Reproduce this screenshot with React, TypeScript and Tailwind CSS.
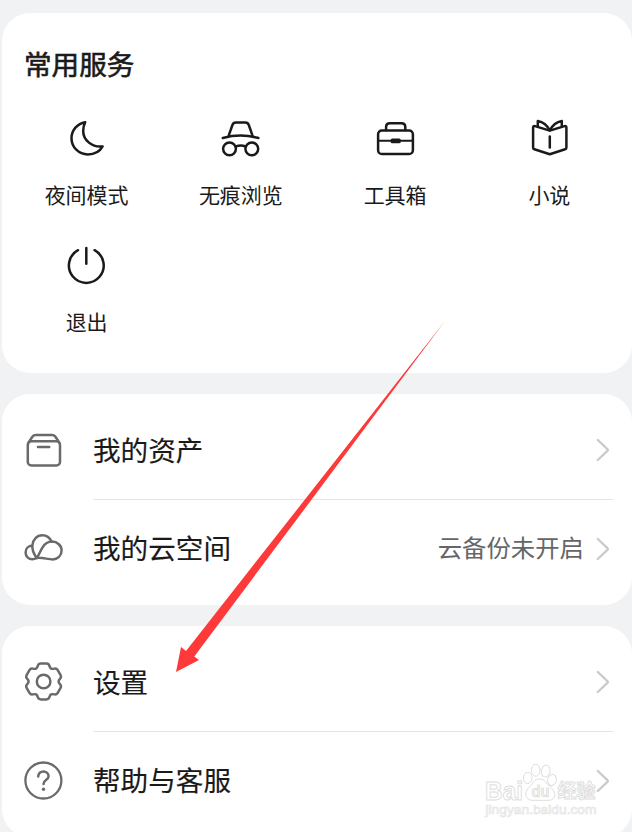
import type { ReactNode } from "react";
import clsx from "clsx";

interface IconProps {
  children: ReactNode;
  className?: string;
}

function Icon({ children, className }: IconProps) {
  return (
    <svg
      viewBox="0 0 40 40"
      fill="none"
      stroke="currentColor"
      strokeWidth={2.5}
      strokeLinecap="round"
      strokeLinejoin="round"
      className={clsx("size-10 shrink-0", className)}
    >
      {children}
    </svg>
  );
}

// ── Service icons
const MoonIcon = () => (
  <Icon>
    <path d="M19.2 3.2C11.4 4.4 5.5 11.2 5.5 19.2C5.5 28.2 12.8 35.4 21.8 35.4C28.2 35.4 34 32.2 36.6 27.4C26 28.6 17.2 21.2 17.2 12C17.2 9 17.8 6 19.2 3.2Z" />
  </Icon>
);

const IncognitoIcon = () => (
  <Icon>
    <path d="M2.8 19Q20.6 14.2 38.4 19" />
    <path d="M8.8 16.4L12.4 6Q13.2 3.5 15.8 3.5H25.4Q28 3.5 28.8 6L32.4 16.4" />
    <circle cx="9.5" cy="29.8" r="6.4" />
    <circle cx="31.8" cy="29.8" r="6.4" />
    <path d="M15.8 27.5Q20.7 25.6 25.6 27.5" />
  </Icon>
);

const ToolboxIcon = () => (
  <Icon>
    <rect x="3.1" y="11.4" width="34.8" height="23.6" rx="3.8" />
    <path d="M11.1 11V8Q11.1 4.2 14.9 4.2H26.5Q30.3 4.2 30.3 8V11" />
    <path d="M3.5 21.7H37.5" strokeWidth={2} />
    <rect x="16.8" y="20.8" width="7.8" height="2.2" rx="0.6" fill="currentColor" />
  </Icon>
);

const NovelIcon = () => (
  <Icon>
    <path d="M20.8 11.6L6 7.1Q4.1 6.6 4.1 8.6V28.4Q4.1 29.8 5.4 30.2L20.8 35.2L36.1 30.2Q37.4 29.8 37.4 28.4V8.6Q37.4 6.6 35.5 7.1Z" />
    <path d="M8.8 7.6V1.9Q16.6 3.2 20.8 11.4Q25 3.2 32.8 1.9V7.6" />
    <path d="M20.8 17.6V28.4" />
  </Icon>
);

const PowerIcon = () => (
  <Icon>
    <path d="M12 4.2A17.4 17.4 0 1 0 28.6 4.2" />
    <path d="M20.3 2V17.8" />
  </Icon>
);

// ── List icons
const AssetsIcon = () => (
  <Icon>
    <rect x="4.8" y="11.3" width="32.2" height="24.2" rx="3.6" />
    <path d="M5.6 12.4L9.4 6.8Q10.6 5 12.8 5H29Q31.2 5 32.4 6.8L36.2 12.4" />
    <path d="M15 17.1H26.2" />
  </Icon>
);

const CloudIcon = () => (
  <Icon>
    <path d="M9.4 16.4C5.4 16.6 2.6 19.6 2.6 23.4C2.6 27.4 5.6 30.2 9.3 30.2C11 30.2 12.4 29.8 13.7 29C10.6 24.6 9 19.6 9.4 16.4C9.8 10.4 14 6.2 19.4 6.2C23.4 6.2 26.8 8.6 28.6 12.6" />
    <path d="M13.7 29C16 26.2 17 22.4 19.4 18.6C21.8 14.8 25 12.6 29 12.6C34.4 12.6 38.6 16.6 38.6 21.6C38.6 26.8 34.6 30.4 29.8 30.4C24.4 30.4 19.6 28.2 13.7 29Z" />
  </Icon>
);

type Point = [number, number];

// closed polygon with every corner softened by `r`
function roundedPolygon(points: Point[], r: number) {
  const toward = (from: Point, to: Point): Point => {
    const len = Math.hypot(to[0] - from[0], to[1] - from[1]);
    const t = Math.min(r / len, 0.5);
    return [from[0] + (to[0] - from[0]) * t, from[1] + (to[1] - from[1]) * t];
  };
  return (
    points
      .map((p, i) => {
        const a = toward(p, points[(i + points.length - 1) % points.length]);
        const b = toward(p, points[(i + 1) % points.length]);
        return `${i === 0 ? "M" : "L"}${a.join(" ")}Q${p.join(" ")} ${b.join(" ")}`;
      })
      .join("") + "Z"
  );
}

const gearPoints = [0, 60, 120, 180, 240, 300].flatMap((tooth) =>
  [
    [-25.5, 15],
    [-16, 18.6],
    [16, 18.6],
    [25.5, 15],
  ].map(([offset, radius]): Point => {
    const angle = ((tooth + offset - 90) * Math.PI) / 180;
    return [20.6 + radius * Math.cos(angle), 19.5 + radius * Math.sin(angle)];
  })
);

const GearIcon = () => (
  <Icon>
    <path d={roundedPolygon(gearPoints, 2.4)} />
    <circle cx="20.6" cy="19.5" r="6.8" />
  </Icon>
);

const HelpIcon = () => (
  <Icon>
    <circle cx="20.4" cy="19.5" r="18" strokeWidth={2.3} />
    <path d="M15.2 15.4C15.4 12.4 17.6 10.4 20.4 10.4C23.4 10.4 25.6 12.6 25.6 15.2C25.6 18.8 20.5 18.6 20.5 23" />
    <circle cx="20.5" cy="28.2" r="1.7" fill="currentColor" stroke="none" />
  </Icon>
);

const Chevron = () => (
  <svg
    viewBox="0 0 16 26"
    fill="none"
    stroke="#cbcbcb"
    strokeWidth={2.4}
    strokeLinecap="round"
    strokeLinejoin="round"
    className="h-[26px] w-4 shrink-0"
  >
    <path d="M2.8 3L12.4 12.2Q13.3 13 12.4 13.8L2.8 23" />
  </svg>
);

const services = [
  { label: "夜间模式", icon: <MoonIcon /> },
  { label: "无痕浏览", icon: <IncognitoIcon /> },
  { label: "工具箱", icon: <ToolboxIcon /> },
  { label: "小说", icon: <NovelIcon /> },
  { label: "退出", icon: <PowerIcon /> },
];

interface RowProps {
  icon: ReactNode;
  label: string;
  note?: string;
}

function Row({ icon, label, note }: RowProps) {
  return (
    <button className="flex w-full items-center pr-[21px] pl-[21px] text-left text-[#6a6a6a]">
      {icon}
      <span className="mb-[3px] ml-[30px] flex-1 text-[27.6px] leading-10 text-[#1a1a1a] [-webkit-text-stroke:0.15px]">{label}</span>
      {note && <span className="mr-[11px] mb-[3px] text-[24.4px] leading-10 text-[#666]">{note}</span>}
      <Chevron />
    </button>
  );
}

function RowCard({ rows }: { rows: RowProps[] }) {
  return (
    <section className="grid h-[211px] shrink-0 grid-rows-[98px_1px_97px] rounded-[28px] bg-white pt-[7px]">
      <Row {...rows[0]} />
      <div className="mr-[19px] ml-[91px] bg-[#e5e5e5]" />
      <Row {...rows[1]} />
    </section>
  );
}

function Watermark() {
  return (
    <svg
      viewBox="0 0 120 56"
      className="pointer-events-none absolute top-[762px] left-[482px] h-14 w-[120px]"
      fill="#fff"
      stroke="#dedede"
      strokeWidth={1}
      fontFamily='"Liberation Sans", "Noto Sans CJK SC", sans-serif'
    >
      <text x="3" y="37.5" fontSize="26" fontWeight="700" textLength="38" lengthAdjust="spacingAndGlyphs">
        Bai
      </text>
      <ellipse cx="45.7" cy="16" rx="4.3" ry="5.6" />
      <ellipse cx="53.7" cy="8.3" rx="4.3" ry="6" />
      <ellipse cx="63.7" cy="9" rx="4.3" ry="6" transform="rotate(12 63.7 9)" />
      <ellipse cx="70" cy="18" rx="4.3" ry="5.6" transform="rotate(15 70 18)" />
      <path d="M57.5 17C52 17 51.5 21.5 47.5 25C41.5 30 43 38 50 38.3H67C74.5 38 74.5 29.5 68.5 25C64.5 22 63.5 17 57.5 17Z" />
      <text x="49.5" y="34.5" fontSize="16" fontWeight="700" fill="#f2f2f2" stroke="#d8d8d8" strokeWidth={0.6} textLength="18" lengthAdjust="spacingAndGlyphs">
        du
      </text>
      <text x="75.5" y="36" fontSize="19" fontWeight="700">
        经验
      </text>
      <text x="3.5" y="52" fontSize="12.5" strokeWidth={0.6} stroke="#e2e2e2" textLength="111" lengthAdjust="spacingAndGlyphs">
        jingyan.baidu.com
      </text>
    </svg>
  );
}

export default function App() {
  return (
    <main className="relative flex h-[832px] w-[632px] flex-col gap-[21px] overflow-hidden bg-[#f1f2f4] pt-[13px] pl-[2px] font-['Noto_Sans_CJK_SC',sans-serif] text-[#1a1a1a]">
      {/* Common services */}
      <section className="h-[360px] shrink-0 rounded-[28px] bg-white pt-[30px]">
        <h2 className="pl-[22px] text-[27.6px] leading-10 font-normal [-webkit-text-stroke:0.6px]">常用服务</h2>
        <div className="mt-9 mr-1.5 ml-[7px] grid grid-cols-4 gap-y-[38px]">
          {services.map(({ label, icon }) => (
            <button key={label} className="flex flex-col items-center gap-[21px]">
              {icon}
              <span className="pl-px text-[21px] leading-7">{label}</span>
            </button>
          ))}
        </div>
      </section>

      <RowCard
        rows={[
          { icon: <AssetsIcon />, label: "我的资产" },
          { icon: <CloudIcon />, label: "我的云空间", note: "云备份未开启" },
        ]}
      />

      <RowCard
        rows={[
          { icon: <GearIcon />, label: "设置" },
          { icon: <HelpIcon />, label: "帮助与客服" },
        ]}
      />

      <Watermark />

      {/* Arrow pointing at the settings row */}
      <svg viewBox="0 0 272 354" className="pointer-events-none absolute top-[320px] left-[175px] h-[354px] w-[272px]">
        <path d="M270 1L11 331L6 327L1 352L24 340L19.3 336.5Z" fill="#fd3a39" />
      </svg>
    </main>
  );
}
